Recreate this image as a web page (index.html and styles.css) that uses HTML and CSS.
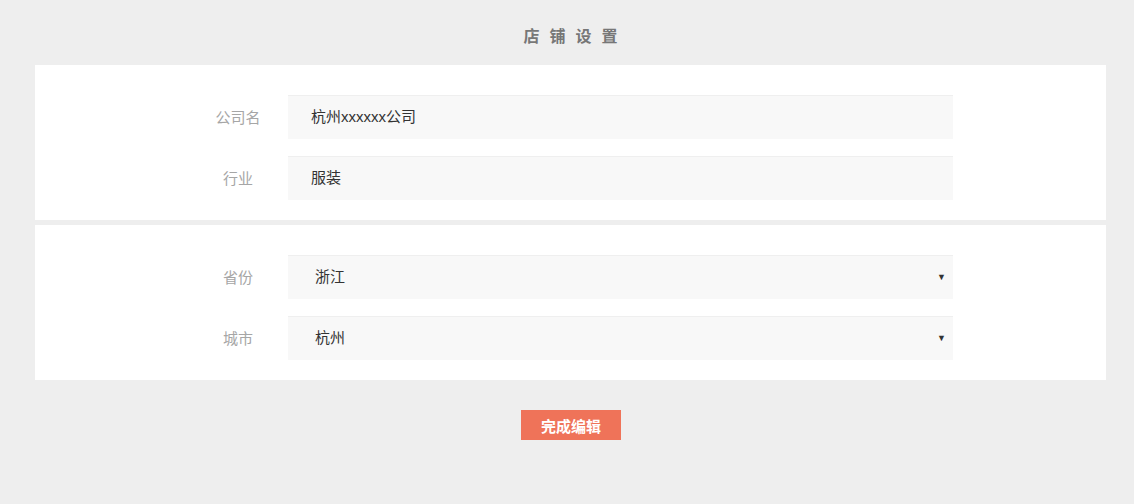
FILE: index.html
```
<!DOCTYPE html>
<html lang="zh">
<head>
<meta charset="utf-8">
<link rel="stylesheet" href="styles.css">
</head>
<body>
<div class="page">
  <h1 class="title">店铺设置</h1>
  <div class="panel">
    <div class="row">
      <label class="label">公司名</label>
      <div class="field">杭州xxxxxx公司</div>
    </div>
    <div class="row">
      <label class="label">行业</label>
      <div class="field">服装</div>
    </div>
  </div>
  <div class="panel">
    <div class="row">
      <label class="label">省份</label>
      <div class="field select">浙江<span class="arrow">▼</span></div>
    </div>
    <div class="row">
      <label class="label">城市</label>
      <div class="field select">杭州<span class="arrow">▼</span></div>
    </div>
  </div>
  <div class="actions">
    <button class="btn">完成编辑</button>
  </div>
</div>
</body>
</html>
```
FILE: styles.css
```
html, body {
  margin: 0;
  padding: 0;
  background: #eeeeee;
  font-family: "Liberation Sans", "Noto Sans CJK SC", sans-serif;
}
.page {
  margin-left: 35px;
  width: 1071px;
  padding-top: 26px;
}
.title {
  margin: 0;
  height: 21px;
  line-height: 21px;
  text-align: center;
  font-size: 16px;
  font-weight: bold;
  color: #777;
  letter-spacing: 10px;
  text-indent: 10px;
}
.panel {
  background: #fff;
  padding: 30px 0 20px 153px;
  margin-top: 18px;
  display: flex;
  flex-direction: column;
  gap: 17px;
}
.panel + .panel {
  margin-top: 5px;
}
.row {
  display: flex;
  align-items: center;
}
.label {
  width: 100px;
  text-align: center;
  font-size: 15px;
  color: #a6a6a6;
  padding-bottom: 2px;
}
.field {
  position: relative;
  width: 665px;
  height: 44px;
  box-sizing: border-box;
  background: #f8f8f8;
  border-top: 1px solid #efefef;
  padding-left: 23px;
  line-height: 42px;
  font-size: 15px;
  color: #333;
}
.field.select {
  padding-left: 27px;
}
.arrow {
  position: absolute;
  right: 7px;
  top: 0;
  font-size: 9px;
  color: #333;
}
.actions {
  display: flex;
  justify-content: center;
  padding-top: 30px;
}
.btn {
  width: 100px;
  height: 30px;
  border: none;
  background: #ef7359;
  color: #fff;
  font-size: 15px;
  font-weight: bold;
  font-family: "Liberation Sans", "Noto Sans CJK SC", sans-serif;
  padding: 0;
  margin-left: 1px;
}
```
